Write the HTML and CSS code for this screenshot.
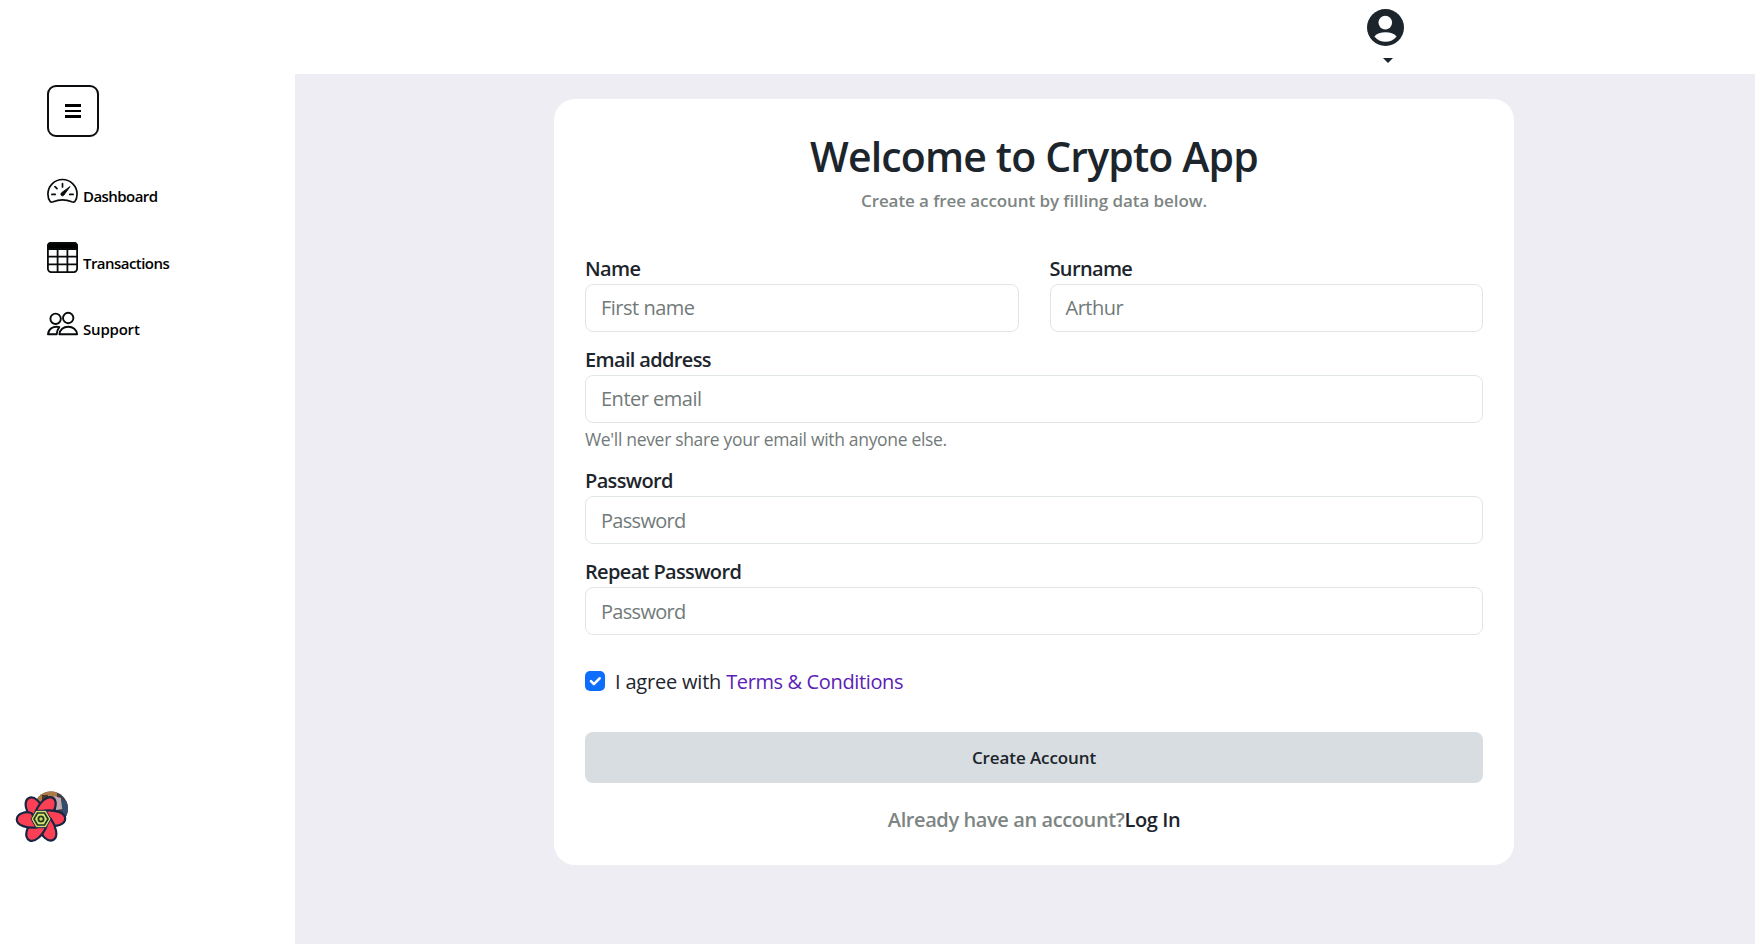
FILE: index.html
```html
<!DOCTYPE html>
<html lang="en">
<head>
<meta charset="utf-8">
<title>Crypto App</title>
<link rel="stylesheet" href="styles.css">
</head>
<body>
<header class="topbar">
  <button class="profile" aria-label="Profile">
    <svg class="avatar" viewBox="0 0 37 37"><circle cx="18.5" cy="18.5" r="18.5" fill="#1d252c"/><circle cx="18.3" cy="13.6" r="6.8" fill="#fff"/><path d="M7.4 27.5C10 24.500 13.500 23.200 18.500 23.200s8.500 1.300 11.100 4.300C27 31 23 32.800 18.500 32.800S10 31 7.400 27.500Z" fill="#fff"/></svg>
    <span class="caret"></span>
  </button>
</header>
<div class="layout">
  <aside class="sidebar">
    <button class="toggle" aria-label="Menu"><span></span><span></span><span></span></button>
    <nav class="nav">
      <a class="nav-item"><svg class="nav-icon" viewBox="0 .5 31 31" fill="none" stroke="#080b0c" stroke-width="1.700" stroke-linecap="round"><path d="M3.300 28.200C1.700 26.300.9 24 .9 20.600A14.600 14.600 0 0 1 30.100 20.600c0 3.400-.8 5.700-2.400 7.600-.8.700-1.800.5-2.900.1-5.500-2.200-13.100-2.200-18.600 0-1.100.4-2.100.6-2.900-.1Z"/><path d="M15.500 10.200v3.200M8 13.200l2 2M4.900 20.900h3.300M22.800 20.900h3.300"/><path d="M22.800 13.400 16.700 21.700a1.600 1.600 0 0 1-2.400-2.200Z" fill="#080b0c" stroke-width="1"/></svg><span>Dashboard</span></a>
      <a class="nav-item"><svg class="nav-icon" viewBox="0 -1 31 31" fill="none" stroke="#080b0c" stroke-width="1.800"><rect x=".9" y=".9" width="29.200" height="29.200" rx="3.300"/><path d="M1 7V4a3 3 0 0 1 3-3h23a3 3 0 0 1 3 3v3Z" fill="#000"/><path d="M10.600 7v23M20.400 7v23M1 14.700h29M1 22.300h29"/></svg><span>Transactions</span></a>
      <a class="nav-item"><svg class="nav-icon" viewBox="0 3 31 31" fill="none" stroke="#080b0c" stroke-width="1.900" stroke-linejoin="round"><circle cx="8.600" cy="13.800" r="5.200"/><circle cx="21.200" cy="13" r="5.200"/><path d="M12.300 22.100C5.600 20.600 1.500 24.500 1 29.300h8.700c.2-2.800 1-5.200 2.600-7.200Z"/><path d="M12.400 29.300c.4-4.500 4-7.600 8.800-7.600s8.500 3.100 8.900 7.600Z"/></svg><span class="support">Support</span></a>
    </nav>
    <button class="devtools" aria-label="Open query devtools">
      <svg viewBox="-26 -29 56 56">
        <defs>
          <clipPath id="photo"><circle cx="10" cy="-10.500" r="17"/></clipPath>
          <path id="petal" d="M-8.500-4C-9.500-14-6.500-24.200-.5-24.200 6-24.200 8.500-14 5.500-9Z" fill="#fb4056" stroke="#192542" stroke-width="2.200" stroke-linejoin="round"/>
        </defs>
        <g clip-path="url(#photo)"><path d="M-8-29h40V10H-8Z" fill="#3d3d49"/><path d="M-8-29h24v14H-8Z" fill="#ad7b47"/><path d="M1-24h6v8H1Z" fill="#4c3827"/><path d="m13-23 7 2 2 11-7 1Z" fill="#c1a9ae"/><path d="m20-20 8 3v14h-6Z" fill="#354b6e"/></g>
        <use href="#petal" transform="rotate(-30)"/><use href="#petal" transform="rotate(30)"/><use href="#petal" transform="rotate(90)"/><use href="#petal" transform="rotate(150)"/><use href="#petal" transform="rotate(210)"/><use href="#petal" transform="rotate(270)"/>
        <path d="M-5-8.700H5L10 0 5 8.700H-5L-10 0Z" fill="#cddc78" stroke="#192542" stroke-width="1"/>
        <path d="M-3.500-6h7L7 0 3.500 6h-7L-7 0Z" fill="#d5e37a" stroke="#21381c" stroke-width="1.700"/><circle r="2.600" fill="#c8dc66" stroke="#21381c" stroke-width="1.800"/>
      </svg>
    </button>
  </aside>
  <main class="content">
    <form class="card">
      <h1 class="title">Welcome to Crypto App</h1>
      <p class="subtitle">Create a free account by filling data below.</p>
      <div class="names">
        <div class="field"><label>Name</label><div class="input">First name</div></div>
        <div class="field"><label>Surname</label><div class="input">Arthur</div></div>
      </div>
      <div class="field email"><label>Email address</label><div class="input">Enter email</div><p class="help">We'll never share your email with anyone else.</p></div>
      <div class="field password"><label>Password</label><div class="input secret">Password</div></div>
      <div class="field repeat"><label>Repeat Password</label><div class="input secret">Password</div></div>
      <div class="agree"><span class="check"><svg viewBox="0 0 20 20"><path d="m6 10.200 2.900 2.900 5.700-5.800" fill="none" stroke="#fff" stroke-width="2.600" stroke-linecap="round" stroke-linejoin="round"/></svg></span><span class="agree-text">I agree with</span><a class="terms">Terms &amp; Conditions</a></div>
      <button class="submit" type="button">Create Account</button>
      <p class="login">Already have an account?<a>Log In</a></p>
    </form>
  </main>
</div>
</body>
</html>
```
FILE: styles.css
```css
* { box-sizing: border-box; }
body { margin: 0; height: 944px; overflow: hidden; background: #fff; color: #1d252c; font-family: "Open Sans", "Noto Sans", sans-serif; font-size: 20px; }
button { padding: 0; border: 0; background: none; font: inherit; color: inherit; }
h1, p { margin: 0; }
.topbar { height: 74px; display: flex; justify-content: flex-end; padding: 9px 351px 0 0; }
.profile { display: flex; flex-direction: column; align-items: center; width: 37px; height: 55px; }
.avatar { width: 37px; height: 37px; flex: none; }
.caret { margin: 12px 0 0 4px; border: 5px solid transparent; border-top: 5px solid #1d252c; border-bottom: 0; }
.layout { display: flex; height: 870px; }
.sidebar { width: 295px; flex: none; padding: 11px 0 27px 47px; display: flex; flex-direction: column; align-items: flex-start; }
.toggle { width: 52px; height: 52px; border: 2px solid #0b0e10; border-radius: 9px; display: flex; flex-direction: column; align-items: center; justify-content: center; gap: 3px; }
.toggle span { width: 16px; height: 2.500px; background: #000; }
.nav { margin-top: 37px; display: flex; flex-direction: column; gap: 36px; }
.nav-item { display: flex; height: 31px; color: #000; font-size: 15px; font-weight: 600; letter-spacing: -.55px; line-height: 20px; }
.nav-item span { margin: 12px 0 0 5px; white-space: nowrap; }
.nav-item .support { margin-top: 11px; letter-spacing: -.2px; }
.nav-icon { width: 31px; height: 31px; overflow: visible; }
.devtools { margin: auto 0 71px -32px; width: 56px; height: 56px; }
.devtools svg { display: block; width: 56px; height: 56px; }
.content { flex: 1; background: #eeedf3; padding: 25px 241px 0 259px; }
.card { height: 766px; background: #fff; border-radius: 21px; padding: 32px 31px 0; }
.title { height: 50px; font-size: 41px; line-height: 50px; font-weight: 600; letter-spacing: -.85px; text-align: center; white-space: nowrap; }
.subtitle { height: 28px; margin-top: 6px; font-size: 17px; line-height: 28px; font-weight: 600; letter-spacing: -.08px; text-align: center; color: #7d8583; }
.names { display: grid; grid-template-columns: 1fr 1fr; gap: 31px; margin-top: 41px; }
label { display: block; height: 28px; line-height: 26px; font-weight: 600; letter-spacing: -.65px; }
.input { height: 48px; border: 1px solid #e0e6e7; border-radius: 8px; padding: 0 15px; line-height: 45px; letter-spacing: -.5px; color: #727a79; }
.secret { line-height: 47px; letter-spacing: -.7px; }
.email { margin-top: 15px; }
.repeat { margin-top: 15px; }
.help { font-size: 17.500px; line-height: 26px; margin-top: 3px; letter-spacing: -.32px; color: #727a79; }
.password { margin-top: 16px; }
.agree { display: flex; align-items: center; height: 30px; margin-top: 31px; }
.check { width: 20px; height: 20px; background: #0d6efd; border-radius: 5px; margin-right: 10px; }
.check svg { display: block; }
.agree-text { letter-spacing: -.2px; }
.terms { color: #5b21b6; margin-left: 5px; letter-spacing: -.37px; }
.submit { display: block; width: 100%; height: 51px; margin-top: 36px; border-radius: 8px; background: #d7dde0; font-size: 17px; font-weight: 600; letter-spacing: -.1px; }
.login { text-align: center; margin-top: 23px; line-height: 28px; font-weight: 600; letter-spacing: -.4px; color: #7d8583; }
.login a { color: #1d252c; }
```
